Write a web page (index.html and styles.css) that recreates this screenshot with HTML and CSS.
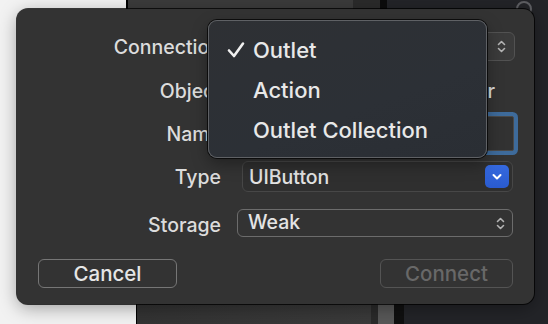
FILE: index.html
```html
<!DOCTYPE html>
<html lang="en">
<head>
  <meta charset="UTF-8" />
  <meta name="viewport" content="width=device-width, initial-scale=1.0"/>
  <title>Connection</title>
  <link rel="stylesheet" href="styles.css">
</head>
<body>

  <!-- what is behind the sheet -->
  <div class="backdrop">
    <div class="band band-top">
      <div class="desk desk-top"></div>
      <div class="canvas canvas-top"></div>
      <div class="gutter-top"></div>
      <div class="divider-top"></div>
      <div class="inspector"><span class="help-ring"></span></div>
    </div>
    <div class="band band-bottom">
      <div class="desk"></div>
      <div class="canvas"></div>
      <div class="gutter"></div>
      <div class="scroller"></div>
      <div class="divider"></div>
      <div class="inspector"></div>
    </div>
  </div>

  <div class="sheet">

    <div class="row row-connection">
      <label class="field-label">Connection</label>
      <!-- its title sits under the open menu -->
      <div class="popup popup-connection">
        <span class="popup-text"></span>
        <svg class="stepper" width="9" height="15" viewBox="0 0 9 15">
          <path d="M1.5 5.5 L4.5 2.5 L7.5 5.5 M1.5 9.5 L4.5 12.5 L7.5 9.5" />
        </svg>
      </div>
    </div>

    <div class="row row-object">
      <label class="field-label">Object</label>
      <div class="value">View Controller</div>
    </div>

    <div class="row row-name">
      <label class="field-label">Name</label>
      <input class="text-field" type="text">
    </div>

    <div class="row row-type">
      <label class="field-label">Type</label>
      <div class="combo">
        <span class="combo-text">UIButton</span>
        <span class="combo-btn">
          <svg width="12" height="8" viewBox="0 0 12 8">
            <path d="M2.5 2 L6 5.5 L9.5 2" />
          </svg>
        </span>
      </div>
    </div>

    <div class="row row-storage">
      <label class="field-label">Storage</label>
      <div class="popup popup-storage">
        <span class="popup-text">Weak</span>
        <svg class="stepper" width="9" height="15" viewBox="0 0 9 15">
          <path d="M1.5 5.5 L4.5 2.5 L7.5 5.5 M1.5 9.5 L4.5 12.5 L7.5 9.5" />
        </svg>
      </div>
    </div>

    <div class="actions">
      <button class="btn">Cancel</button>
      <button class="btn btn-disabled" disabled>Connect</button>
    </div>

    <!-- open popup menu for Connection -->
    <ul class="menu">
      <li class="menu-item">
        <svg class="check" width="18" height="18" viewBox="0 0 18 18">
          <path d="M2 9.5 L7 15 L16 2.5" />
        </svg>
        Outlet
      </li>
      <li class="menu-item">Action</li>
      <li class="menu-item">Outlet Collection</li>
    </ul>

  </div>

</body>
</html>
```

FILE: styles.css
```css
body {
  margin: 0;
  width: 548px;
  height: 324px;
  overflow: hidden;
  position: relative;
  font-family: Inter, "Noto Sans", sans-serif;
  font-weight: 500;
  background-color: #f2f2f2;
}

/* backdrop columns */
.backdrop {
  display: flex;
  flex-direction: column;
  height: 100%;
}

.band {
  display: flex;
}

.band-top {
  height: 14px;
}

.band-bottom {
  flex: 1;
}

.desk {
  width: 136px;
  background-color: #f2f2f2;
}

.desk-top {
  width: 126px;
}

.canvas {
  width: 234px;
  border-left: 1px solid #000;
  background: linear-gradient(90deg, #333 0%, #3a3a3a 100%);
}

.canvas-top {
  width: 225px;
  border-left-width: 2px;
  background: #3b3b3b;
}

.gutter-top {
  width: 27px;
  background-color: #2b2b2b;
}

.divider-top {
  width: 7px;
  background-color: #0c0c0c;
}

.gutter {
  width: 7px;
  background-color: #2a2a2a;
}

.scroller {
  width: 16px;
  background-color: #585858;
}

.divider {
  width: 10px;
  background-color: #101010;
}

.inspector {
  flex: 1;
  background-color: #232428;
}

.band-top .inspector {
  padding: 1px 0 0 129px;
}

.help-ring {
  display: block;
  width: 12px;
  height: 12px;
  border: 2px solid #5e5f63;
  border-radius: 50%;
}

/* the sheet */
.sheet {
  position: absolute;
  left: 17px;
  top: 9px;
  width: 517px;
  height: 295px;
  box-sizing: border-box;
  padding: 23px 21px 0 0;
  background-color: #333;
  border-radius: 11px;
  box-shadow: 0 0 0 1px rgba(0,0,0,0.75), 0 4px 18px rgba(0,0,0,0.35);
  color: #dedede;
}

.row {
  display: flex;
  align-items: center;
}

.field-label {
  width: 204px;
  flex-shrink: 0;
  margin-right: 16px;
  text-align: right;
  font-size: 19.5px;
  color: #dcdcdc;
}

.row-connection {
  height: 29px;
}

.row-object {
  height: 30px;
  margin-top: 15px;
}

.row-name {
  height: 35px;
  margin-top: 10px;
}

.row-type {
  height: 31px;
  margin-top: 10px;
}

.row-storage {
  height: 28px;
  margin-top: 17px;
}

.row-storage .field-label {
  padding-top: 3px;
}

.popup {
  flex: 1;
  height: 100%;
  box-sizing: border-box;
  display: flex;
  align-items: center;
  justify-content: space-between;
  border-radius: 6px;
  font-size: 19.5px;
}

.popup-connection {
  margin-left: 5px;
  margin-right: -2px;
  padding: 0 8px 0 8px;
  background-color: #3b3b3b;
  border: 1.5px solid #525252;
}

.popup-storage {
  padding: 0 7px 3px 10px;
  border: 1.5px solid #6c6c6c;
  color: #e4e4e4;
}

.popup-storage .stepper {
  margin-top: 3px;
}

.stepper path {
  fill: none;
  stroke: #b4b4b4;
  stroke-width: 1.6;
  stroke-linecap: round;
  stroke-linejoin: round;
}

.value {
  flex: 1;
  text-align: right;
  padding-right: 18px;
  font-size: 19.5px;
  color: #dcdcdc;
}

.text-field {
  flex: 1;
  height: 100%;
  box-sizing: border-box;
  margin: 0 -1px 0 3px;
  border: 1px solid #4a4a4a;
  border-radius: 2px;
  background-color: #323232;
  box-shadow: 0 0 0 4px #3e6b9b;
  outline: none;
}

.combo {
  flex: 1;
  height: 100%;
  box-sizing: border-box;
  margin-left: 5px;
  padding: 0 3px 0 6px;
  display: flex;
  align-items: center;
  justify-content: space-between;
  background-color: #2f2f2f;
  border: 1px solid #474747;
  border-radius: 6px;
  font-size: 19.5px;
  color: #e2e2e2;
}

.combo-btn {
  width: 24px;
  height: 23px;
  display: flex;
  align-items: center;
  justify-content: center;
  border-radius: 5px;
  background: linear-gradient(180deg, #3569df 0%, #2a5bcf 100%);
}

.combo-btn path {
  fill: none;
  stroke: #fff;
  stroke-width: 2;
  stroke-linecap: round;
  stroke-linejoin: round;
}

/* buttons */
.actions {
  display: flex;
  justify-content: space-between;
  margin-top: 22px;
  padding-left: 21px;
}

.btn {
  height: 29px;
  box-sizing: border-box;
  padding: 0;
  width: 139px;
  font-family: inherit;
  font-weight: 500;
  font-size: 20.5px;
  color: #e6e6e6;
  background: transparent;
  border: 1.5px solid #767676;
  border-radius: 6px;
}

.btn-disabled {
  width: 133px;
  color: #686868;
  border-color: #545454;
}

/* popup menu */
.menu {
  position: absolute;
  left: 191px;
  top: 11px;
  width: 279px;
  height: 138px;
  box-sizing: border-box;
  margin: 0;
  padding: 10px 0 0 0;
  list-style: none;
  border-radius: 9px;
  background: linear-gradient(160deg, #2e3034 0%, #2c3036 60%, #2a2e34 100%);
  box-shadow: 0 0 0 1px #0c0c0c, inset 0 0 0 1px #5f6165, 0 6px 16px rgba(0,0,0,0.35);
}

.menu-item {
  position: relative;
  height: 40px;
  line-height: 40px;
  padding-left: 45px;
  font-size: 22px;
  color: #e8e8e8;
}

.check {
  position: absolute;
  left: 19px;
  top: 11px;
}

.check path {
  fill: none;
  stroke: #f0f0f0;
  stroke-width: 2.6;
  stroke-linecap: round;
  stroke-linejoin: round;
}
```
